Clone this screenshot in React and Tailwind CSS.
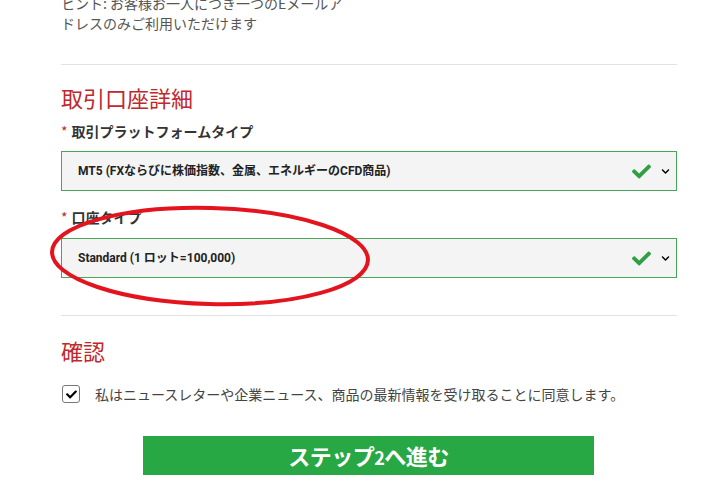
import { FaCheck, FaChevronDown } from 'react-icons/fa';

const jp = { fontFamily: "'Noto Sans CJK JP', sans-serif" };
const ui = { fontFamily: "Roboto, 'Noto Sans CJK JP', sans-serif" };

// select box with the green "valid" check
const SelectBox = ({ value }) => (
    <div className="h-[40px] w-full flex items-center border border-[#4aa55a] bg-[#f4f4f4] pl-[16px] pr-[6px]">
        <span className="flex-1 text-[12px] font-bold text-[#222]" style={ui}>{value}</span>
        <FaCheck className="text-[#2ea043] w-[19px] h-[19px] mr-[10px]" />
        <FaChevronDown className="text-black w-[9px] h-[9px]" />
    </div>
);

const Label = ({ text }) => (
    <div className="text-[14px] font-bold text-[#333] leading-[20px]" style={jp}>
        <span className="text-[#c0282d] font-normal mr-[4px]">*</span>{text}
    </div>
);

const App = () => {
    return (
        <div className="relative w-[709px] h-[500px] overflow-hidden bg-white">
            <div className="pl-[61px] w-[677px] mt-[-7px]">
                <p className="text-[14px] leading-[20px] text-[#555]" style={jp}>
                    ヒント: お客様お一人につき一つのEメールア<br />ドレスのみご利用いただけます
                </p>
                <div className="mt-[31px] border-t border-[#e2e2e2]" />

                <h2 className="mt-[18px] text-[22px] leading-[28px] text-[#c0282d]" style={jp}>取引口座詳細</h2>
                <div className="mt-[10px]"><Label text="取引プラットフォームタイプ" /></div>
                <div className="mt-[10px]"><SelectBox value="MT5 (FXならびに株価指数、金属、エネルギーのCFD商品)" /></div>

                <div className="mt-[16px]"><Label text="口座タイプ" /></div>
                <div className="mt-[11px]"><SelectBox value="Standard (1 ロット=100,000)" /></div>

                <div className="mt-[37px] border-t border-[#e2e2e2]" />
                <h2 className="mt-[20px] text-[22px] leading-[28px] text-[#c0282d]" style={jp}>確認</h2>

                <div className="mt-[21px] flex items-center">
                    <div className="w-[18px] h-[18px] ml-[1px] rounded-[3px] border border-[#777] bg-white flex items-center justify-center">
                        <FaCheck className="w-[11px] h-[11px] text-black" />
                    </div>
                    <span className="ml-[15px] text-[14px] leading-[18px] text-[#444]" style={jp}>
                        私はニュースレターや企業ニュース、商品の最新情報を受け取ることに同意します。
                    </span>
                </div>
            </div>

            <div className="mt-[33px] ml-[143px] w-[451px] h-[39px] bg-[#28a745] flex items-center justify-center">
                <span className="text-white text-[22px] font-bold tracking-[-0.5px]" style={jp}>ステップ<span className="text-[18px]">2</span>へ進む</span>
            </div>

            {/* hand drawn red circle marking the account type */}
            <svg className="absolute left-0 top-0 pointer-events-none" width="709" height="500">
                <ellipse cx="210" cy="256" rx="158" ry="48" fill="none" stroke="#e3141d" strokeWidth="4" transform="rotate(1.5 210 256)" />
            </svg>
        </div>
    );
};

export default App;
